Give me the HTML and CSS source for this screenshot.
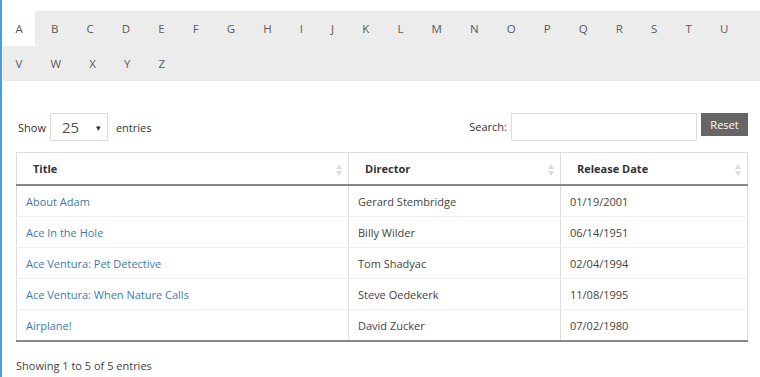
FILE: index.html
```html
<!DOCTYPE html>
<html>
<head>
<meta charset="utf-8">
<link rel="stylesheet" href="styles.css">
</head>
<body>
<div class="page">
  <div class="alpha">
    <span class="letter active">A</span><span class="letter">B</span><span class="letter">C</span><span class="letter">D</span><span class="letter">E</span><span class="letter">F</span><span class="letter">G</span><span class="letter">H</span><span class="letter">I</span><span class="letter">J</span><span class="letter">K</span><span class="letter">L</span><span class="letter">M</span><span class="letter">N</span><span class="letter">O</span><span class="letter">P</span><span class="letter">Q</span><span class="letter">R</span><span class="letter">S</span><span class="letter">T</span><span class="letter">U</span><span class="letter">V</span><span class="letter">W</span><span class="letter">X</span><span class="letter">Y</span><span class="letter">Z</span>
  </div>
  <div class="content">
    <div class="controls">
      <div class="length">
        <span>Show</span>
        <span class="select"><span class="sel-val">25</span><span class="sel-arrow">&#9662;</span></span>
        <span>entries</span>
      </div>
      <div class="search">
        <span>Search:</span>
        <span class="input"></span>
        <span class="reset">Reset</span>
      </div>
    </div>
    <table class="grid">
      <thead>
        <tr>
          <th class="c1">Title<span class="sort"></span></th>
          <th class="c2">Director<span class="sort"></span></th>
          <th class="c3">Release Date<span class="sort"></span></th>
        </tr>
      </thead>
      <tbody>
        <tr><td><a>About Adam</a></td><td>Gerard Stembridge</td><td>01/19/2001</td></tr>
        <tr><td><a>Ace In the Hole</a></td><td>Billy Wilder</td><td>06/14/1951</td></tr>
        <tr><td><a>Ace Ventura: Pet Detective</a></td><td>Tom Shadyac</td><td>02/04/1994</td></tr>
        <tr><td><a>Ace Ventura: When Nature Calls</a></td><td>Steve Oedekerk</td><td>11/08/1995</td></tr>
        <tr><td><a>Airplane!</a></td><td>David Zucker</td><td>07/02/1980</td></tr>
      </tbody>
    </table>
    <div class="info">Showing 1 to 5 of 5 entries</div>
  </div>
</div>
</body>
</html>
```
FILE: styles.css
```css
html, body {
  margin: 0;
  padding: 0;
  background: #fff;
}
body {
  font-family: "Open Sans", "Noto Sans", sans-serif;
  font-size: 11px;
  color: #333;
}
.page {
  border-left: 2px solid #4a9fd5;
  padding-left: 1px;
  padding-top: 11px;
  min-height: 366px;
}
.alpha {
  background: #ececec;
  display: flex;
  flex-wrap: wrap;
}
.letter {
  height: 35px;
  line-height: 35px;
  padding: 0 12.5px;
  margin-right: 3.1px;
  color: #5a5a5a;
  font-size: 11.5px;
}
.letter.active {
  background: #fff;
}
.content {
  padding: 32px 12px 0 13px;
}
.controls {
  display: flex;
  justify-content: space-between;
  align-items: flex-start;
  height: 28px;
}
.length {
  display: flex;
  align-items: center;
  height: 28px;
  padding-left: 2px;
}
.select {
  display: flex;
  align-items: center;
  justify-content: space-between;
  box-sizing: border-box;
  width: 58px;
  height: 28px;
  border: 1px solid #ddd;
  margin: 0 8px 0 4px;
  padding: 0 6px 0 11px;
}
.sel-val {
  font-size: 15px;
  color: #555;
}
.sel-arrow {
  font-size: 9px;
  color: #333;
}
.search {
  display: flex;
  align-items: flex-start;
}
.search > span:first-child {
  line-height: 28px;
}
.input {
  box-sizing: border-box;
  width: 186px;
  height: 28px;
  border: 1px solid #ddd;
  margin-left: 4px;
}
.reset {
  box-sizing: border-box;
  width: 47px;
  height: 23px;
  line-height: 23px;
  background: #666;
  color: #fff;
  text-align: center;
  margin-left: 4px;
}
.grid {
  margin-top: 11px;
  width: 732px;
  border-collapse: collapse;
  border: 1px solid #ddd;
  border-bottom: 2px solid #888;
}
.grid th {
  position: relative;
  height: 31px;
  text-align: left;
  font-weight: bold;
  color: #333;
  padding: 0 16px;
  border-left: 1px solid #ddd;
  border-bottom: 2px solid #888;
}
.grid .c1 { width: 299px; }
.grid .c2 { width: 179px; }
.sort {
  position: absolute;
  right: 6px;
  top: 11px;
  width: 6px;
  height: 12px;
}
.sort::before, .sort::after {
  content: "";
  position: absolute;
  left: 0;
  border-left: 3px solid transparent;
  border-right: 3px solid transparent;
}
.sort::before {
  top: 0;
  border-bottom: 5px solid #ddd;
}
.sort::after {
  bottom: 0;
  border-top: 5px solid #ddd;
}
.grid td {
  height: 30px;
  padding: 0 9px;
  border-left: 1px solid #ddd;
  border-bottom: 1px solid #eee;
  color: #444;
}
.grid td a {
  color: #3d7ab3;
}
.info {
  margin-top: 16px;
  color: #444;
}
```
